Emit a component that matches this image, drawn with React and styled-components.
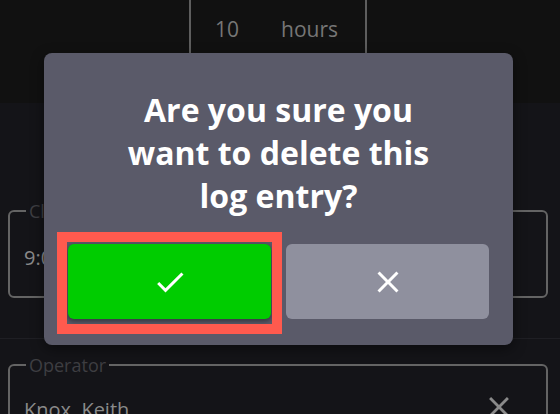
import React from "react";
import styled, { createGlobalStyle } from "styled-components";
import { MdCheck, MdClose } from "react-icons/md";

const GlobalStyle = createGlobalStyle`
  body {
    margin: 0;
    background: #141418;
    font-family: "Open Sans", "Noto Sans", sans-serif;
  }
`;

const Page = styled.div`
  position: relative;
  width: 560px;
  height: 414px;
  overflow: hidden;
  background: #141418;
`;

const TopBar = styled.div`
  height: 103px;
  background: #111111;
  display: flex;
  justify-content: center;
`;

const DurationBox = styled.div`
  width: 178px;
  height: 100px;
  margin-top: -20px;
  margin-left: -4px;
  border: 2px solid #5e5e5e;
  border-radius: 6px;
  display: flex;
  align-items: flex-start;
  padding: 33px 0 0 24px;
  box-sizing: border-box;
  color: #767676;
  font-size: 21px;
`;

const Amount = styled.span`
  margin-right: 42px;
`;

const Body = styled.div`
  padding: 0 12px 0 8px;
`;

const FieldRow = styled.div`
  display: grid;
  grid-template-columns: 1fr 1fr;
  gap: 16px;
  margin-top: 97px;
`;

const Field = styled.fieldset`
  margin: 0;
  padding: ${(p) => (p.$top ? "20px 14px 0" : "0 14px 4px")};
  height: ${(p) => p.$height}px;
  border: 2px solid #646464;
  border-radius: 6px;
  display: flex;
  align-items: ${(p) => (p.$top ? "flex-start" : "center")};
  justify-content: space-between;
  box-sizing: border-box;
`;

const Legend = styled.legend`
  padding: 0 3px;
  margin-left: 2px;
  font-size: 18px;
  line-height: 22px;
  color: #3e3e42;
`;

const Value = styled.span`
  font-size: 20px;
  line-height: 27px;
  color: #8a8a8a;
`;

const Divider = styled.div`
  height: 1px;
  margin: 40px -12px 15px -8px;
  background: #1f1f24;
`;

const ClearIcon = styled(MdClose)`
  color: #8a8a8a;
  margin-right: 16px;
  margin-top: -6px;
  flex-shrink: 0;
`;

const Backdrop = styled.div`
  position: absolute;
  inset: 0;
  padding: 53px 0 0 44px;
`;

const Dialog = styled.div`
  width: 469px;
  height: 292px;
  box-sizing: border-box;
  padding: 35px 24px 26px;
  background: #5a5a69;
  border-radius: 8px;
  box-shadow: 0 4px 14px rgba(0, 0, 0, 0.45);
  display: flex;
  flex-direction: column;
`;

const Title = styled.h2`
  margin: 0 auto 27px;
  max-width: 340px;
  font-size: 32px;
  line-height: 43px;
  font-weight: 700;
  color: #ffffff;
  text-align: center;
`;

const Actions = styled.div`
  display: grid;
  grid-template-columns: 1fr 1fr;
  gap: 15px;
`;

const ActionButton = styled.button`
  position: relative;
  height: 75px;
  border: none;
  border-radius: 6px;
  background: ${(p) => (p.$confirm ? "#00cc00" : "#8f909e")};
  color: #ffffff;
  display: flex;
  align-items: center;
  justify-content: center;
  cursor: pointer;
  box-shadow: ${(p) =>
    p.$confirm ? "0 2px 4px 1px rgba(0, 0, 0, 0.35)" : "none"};

  &::after {
    content: "";
    display: ${(p) => (p.$focused ? "block" : "none")};
    position: absolute;
    inset: -12px -11px -15px -11px;
    border: 10px solid #ff5a4e;
  }
`;

export default function App() {
  return (
    <>
      <GlobalStyle />
      <Page>
        <TopBar>
          <DurationBox>
            <Amount>10</Amount>
            <span>hours</span>
          </DurationBox>
        </TopBar>
        <Body>
          <FieldRow>
            <Field $height={98}>
              <Legend>Clock in</Legend>
              <Value>9:00 AM</Value>
            </Field>
            <Field $height={98}>
              <Legend>Clock out</Legend>
              <Value>7:00 PM</Value>
            </Field>
          </FieldRow>
          <Divider />
          <Field $height={100} $top>
            <Legend>Operator</Legend>
            <Value>Knox, Keith</Value>
            <ClearIcon size={34} />
          </Field>
        </Body>
        <Backdrop>
          <Dialog>
            <Title>Are you sure you want to delete this log entry?</Title>
            <Actions>
              <ActionButton $confirm $focused aria-label="Confirm">
                <MdCheck size={36} />
              </ActionButton>
              <ActionButton aria-label="Cancel">
                <MdClose size={36} />
              </ActionButton>
            </Actions>
          </Dialog>
        </Backdrop>
      </Page>
    </>
  );
}
